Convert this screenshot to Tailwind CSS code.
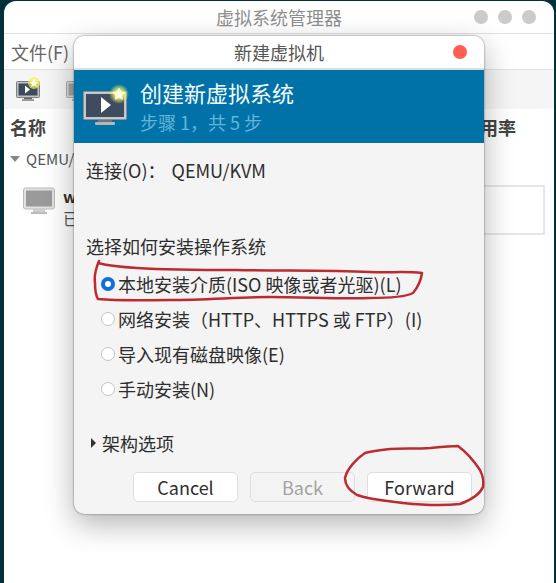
<!DOCTYPE html>
<html lang="zh-CN">
<head>
  <meta charset="UTF-8" />
  <title>新建虚拟机</title>
  <script src="https://cdn.jsdelivr.net/npm/@tailwindcss/browser@4"></script>
</head>
<body class="h-[583px] w-[556px] overflow-hidden bg-[#04303c] font-['Noto_Sans_CJK_SC',sans-serif]">
  <div class="relative h-[583px] w-[556px] pl-[4px] pr-[2px] pt-[1px]">

    <!-- main window behind the dialog -->
    <div class="h-[582px] overflow-hidden rounded-t-[12px] bg-white text-[#555]">
      <div class="flex h-[33px] items-center border-b border-[#e2e2e2] pr-[18px]">
        <div class="w-[526px] pl-[28px] text-center text-[18px] leading-none text-[#8e8e8e]">虚拟系统管理器</div>
        <div class="ml-[-52px] flex gap-[10px]">
          <span class="size-[14px] rounded-full bg-[#cbcbcb]"></span>
          <span class="size-[14px] rounded-full bg-[#cbcbcb]"></span>
          <span class="size-[14px] rounded-full bg-[#cbcbcb]"></span>
        </div>
      </div>
      <div class="flex h-[36px] items-center border-b border-[#e2e2e2] pl-[7px] text-[18px] leading-none text-[#666]">文件(F)</div>
      <div class="flex h-[39px] items-center gap-[22px] bg-[#f5f5f5] pl-[12px]">
        <svg width="28" height="26" viewBox="0 0 28 26">
          <rect x="0.500" y="4.500" width="23" height="16" rx="1" fill="#c4c4c4" stroke="#7d7d7d"/>
          <rect x="2.500" y="6.500" width="19" height="12" fill="#3d4a5c"/>
          <path d="M9 8.500l5 4-5 4z" fill="#fff"/>
          <rect x="8" y="21" width="8" height="1" fill="#666"/>
          <rect x="6" y="22" width="12" height="2" fill="#999"/>
          <circle cx="18" cy="6" r="6" fill="#f2f25a" fill-opacity="0.700"/>
          <path d="M18 1.500l1.400 2.900 3.100.400-2.300 2.100.700 3.100-2.900-1.600-2.900 1.600.700-3.100-2.300-2.100 3.100-.400z" fill="#fffde0"/>
        </svg>
        <svg width="28" height="26" viewBox="0 0 28 26">
          <rect x="0.500" y="4.500" width="23" height="16" rx="1" fill="#ddd" stroke="#aaa"/>
          <rect x="2.500" y="6.500" width="19" height="12" fill="#a5a5a5"/>
          <rect x="6" y="22" width="12" height="2" fill="#bbb"/>
        </svg>
      </div>
      <div class="flex h-[37px] items-center justify-between pl-[6px] pr-[38px] text-[18px] font-bold text-[#444]">
        <span>名称</span><span>用率</span>
      </div>
      <div class="flex h-[26px] items-center gap-[6px] pl-[6px] text-[15px] text-[#555]">
        <span class="h-0 w-0 border-x-[5px] border-t-[6px] border-x-transparent border-t-[#888]"></span>
        <span>QEMU/</span>
      </div>
      <div class="mt-[13px] flex items-start justify-between pl-[19px] pr-[9px]">
        <div class="flex gap-[8px]">
          <svg width="32" height="28" viewBox="0 0 32 28" class="mt-[2px]">
            <rect x="0.500" y="1" width="31" height="21" rx="2" fill="#e2e2e2" stroke="#bbb"/>
            <rect x="3" y="3.500" width="26" height="16" fill="#9a9a9a"/>
            <rect x="10" y="22" width="12" height="3" fill="#ccc"/>
            <rect x="8" y="25" width="16" height="2" fill="#bbb"/>
          </svg>
          <div class="text-[16px] leading-[22px]">
            <div class="font-bold text-[#333]">win10</div>
            <div>已关机</div>
          </div>
        </div>
        <div class="h-[50px] w-[65px] border-2 border-[#e6e6e6] bg-white"></div>
      </div>
    </div>

    <!-- dialog window -->
    <div class="absolute left-[74px] top-[36px] h-[478px] w-[410px] overflow-hidden rounded-[10px] bg-[#f4f4f4] text-[#2e2e2e] shadow-[0_0_2px_rgba(0,0,0,0.6),0_10px_30px_rgba(0,0,0,0.3)]">
      <div class="relative flex h-[32px] items-center justify-center bg-white text-[18px] leading-none text-[#555]">
        新建虚拟机
        <span class="absolute right-[17px] top-[9px] size-[14px] rounded-full bg-[#ff5c54]"></span>
      </div>
      <div class="h-[2px] bg-[#dcdcdc]"></div>
      <div class="flex h-[73px] gap-[11px] bg-[#0072a7] pl-[9px]">
        <svg width="46" height="46" viewBox="0 0 46 46" class="mt-[14px]">
          <defs>
            <radialGradient id="glow"><stop offset="35%" stop-color="#f4f56a"/><stop offset="100%" stop-color="#f4f56a" stop-opacity="0"/></radialGradient>
          </defs>
          <rect x="0.500" y="7.500" width="43" height="28" rx="1" fill="#c8c8c8" stroke="#8f8f8f"/>
          <rect x="3" y="10" width="38" height="23" fill="#3f4c60"/>
          <path d="M18 13l10 8-10 8z" fill="#fff"/>
          <rect x="15" y="36" width="14" height="2" fill="#6b7480"/>
          <rect x="12" y="38" width="20" height="3" rx="1" fill="#b5b5b5"/>
          <circle cx="36" cy="10" r="10" fill="url(#glow)"/>
          <path d="M36 3.500l2 4.300 4.600.500-3.400 3.100 1 4.600-4.200-2.400-4.200 2.400 1-4.600-3.400-3.100 4.600-.500z" fill="#fffde0"/>
        </svg>
        <div class="pt-[7px]">
          <div class="text-[22px] leading-[30px] text-[#f2fbff]">创建新虚拟系统</div>
          <div class="mt-[3px] text-[18px] leading-[24px] text-[#64b4dc]">步骤 1，共 5 步</div>
        </div>
      </div>
      <div class="pl-[12px] pt-[14px] text-[18px] leading-[26px]">
        <div class="flex gap-[6px]"><span>连接(O)：</span><span>QEMU/KVM</span></div>
        <div class="mt-[50px]">选择如何安装操作系统</div>
        <div class="mt-[12px] flex flex-col gap-[9px] pl-[15px]">
          <label class="flex items-center gap-[3px]">
            <span class="flex size-[14px] items-center justify-center rounded-full bg-[#0f6ee0]"><span class="size-[6px] rounded-full bg-white"></span></span>
            本地安装介质(ISO 映像或者光驱)(L)
          </label>
          <label class="flex items-center gap-[3px]">
            <span class="size-[14px] rounded-full border border-[#c4c4c4] bg-white"></span>
            网络安装（HTTP、HTTPS 或 FTP）(I)
          </label>
          <label class="flex items-center gap-[3px]">
            <span class="size-[14px] rounded-full border border-[#c4c4c4] bg-white"></span>
            导入现有磁盘映像(E)
          </label>
          <label class="flex items-center gap-[3px]">
            <span class="size-[14px] rounded-full border border-[#c4c4c4] bg-white"></span>
            手动安装(N)
          </label>
        </div>
        <div class="mt-[28px] flex items-center gap-[6px] pl-[5px]">
          <span class="h-0 w-0 border-y-[5px] border-l-[5px] border-y-transparent border-l-[#333]"></span>
          架构选项
        </div>
      </div>
      <div class="absolute bottom-[12px] right-[12px] flex gap-[12px] text-[18px]">
        <button class="h-[30px] w-[105px] rounded-[5px] border border-[#dedede] bg-white leading-none">Cancel</button>
        <button class="h-[30px] w-[105px] rounded-[5px] border border-[#dedede] bg-[#f4f4f4] leading-none text-[#a3a3a3]">Back</button>
        <button class="h-[30px] w-[105px] rounded-[5px] border border-[#dedede] bg-white leading-none">Forward</button>
      </div>
    </div>

    <!-- red pen marks drawn over the screenshot -->
    <svg class="absolute left-0 top-0" width="556" height="583" viewBox="0 0 556 583" fill="none" stroke="#bd2b32" stroke-width="2.500" stroke-linecap="round" stroke-linejoin="round">
      <path d="M99 261C96 268 94 276 95 283C95 291 96 296 98 299C120 301 145 300 170 300C205 300 240 297 270 297C305 297 340 299 370 298C390 298 405 297 413 293C418 287 421 280 422 273C405 271 388 273 370 272C325 270 280 271 237 270C205 270 170 270 137 268C120 267 106 265 98 263"/>
      <path d="M365 453C356 459 347 469 345 478C345 486 350 491 357 495C372 500 388 501 403 503C422 505 442 506 460 504C471 500 480 494 483 487C484 481 483 476 480 470C474 461 466 452 458 446C449 446 440 447 430 448C416 449 403 448 390 449C381 450 372 451 365 453"/>
    </svg>
  </div>
</body>
</html>
